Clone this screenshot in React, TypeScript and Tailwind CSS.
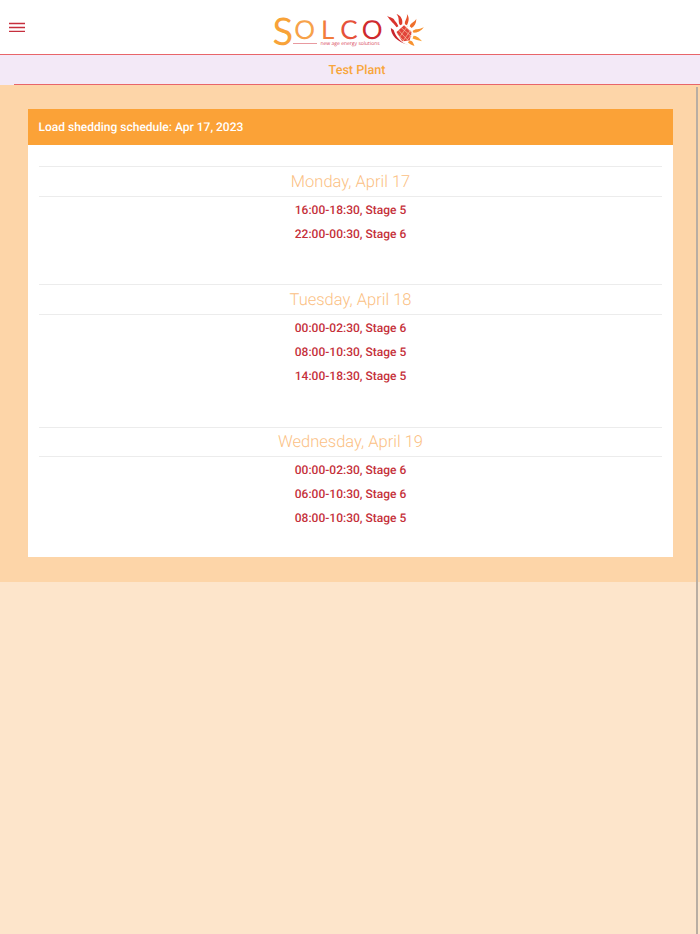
import React from "react";

const schedule = [
  {
    day: "Monday, April 17",
    slots: ["16:00-18:30, Stage 5", "22:00-00:30, Stage 6"],
  },
  {
    day: "Tuesday, April 18",
    slots: ["00:00-02:30, Stage 6", "08:00-10:30, Stage 5", "14:00-18:30, Stage 5"],
  },
  {
    day: "Wednesday, April 19",
    slots: ["00:00-02:30, Stage 6", "06:00-10:30, Stage 6", "08:00-10:30, Stage 5"],
  },
];

const rays = [
  { d: "M12 15 C9 11 6 9 2 3 C5 5 9 5 10 8 C12 10 13 12 14 14 Z", fill: "#d9342e" },
  { d: "M16 13 C13 10 16 6 12 1 C17 3 19 7 18 12 Z", fill: "#dd3b2d" },
  { d: "M21 12 C20 8 24 6 23 1 C26 5 25 9 23 13 Z", fill: "#e8542c" },
  { d: "M26 14 C27 10 31 10 33 6 C33 11 31 14 28 16 Z", fill: "#ef6f2b" },
  { d: "M29 19 C32 16 35 18 41 15 C38 19 34 21 30 21 Z", fill: "#f68f2e" },
  { d: "M30 24 C33 24 36 26 39 30 C35 29 32 28 29 27 Z", fill: "#f9a032" },
  { d: "M26 29 C29 29 30 32 31 35 C28 34 26 33 24 31 Z", fill: "#f79230" },
];

const SunIcon = () => (
  <svg width="40" height="34" viewBox="0 0 42 36" className="mt-px">
    {rays.map((ray, index) => (
      <path key={index} d={ray.d} fill={ray.fill} />
    ))}
    <path d="M12 20 L20 13 L28 20 L26 29 L18 30 Z" fill="#e2433a" />
    <path
      d="M14 18 L25 30 M17 15.5 L28 25 M21 14 L28 21 M12.5 22 L20 30 M15 26 L24 13.5 M19 29.5 L27 18 M23 29 L28.5 22"
      stroke="#f9c9a8"
      strokeWidth="0.7"
    />
    <path d="M6 16 C6 23 12 31 25 34 C17 32 11 25 9 18 Z" fill="#c9242c" />
  </svg>
);

const Logo = () => (
  <div className="flex h-[36px] items-start">
    <div className="relative flex w-[111px] items-start font-['Lato',sans-serif] font-normal">
      <span className="ml-[-1px] text-[38px] leading-none text-[#f8a338]">S</span>
      <span className="mt-[7px] ml-[1px] text-[26px] leading-[21px] text-[#f7a24a]">O</span>
      <span className="mt-[7px] ml-[6px] text-[26px] leading-[21px] text-[#f27c3a]">L</span>
      <span className="mt-[7px] ml-[6px] text-[26px] leading-[21px] text-[#e6523a]">C</span>
      <span className="mt-[7px] ml-[4px] text-[26px] leading-[21px] text-[#cf2a2e]">O</span>
      <div className="absolute top-[29px] left-[47px] whitespace-nowrap font-['Open_Sans',sans-serif] text-[5px] leading-[6px] font-normal text-[#d9465a]">
        new age energy solutions
      </div>
      <div className="absolute top-[31px] left-[19px] h-px w-[24px] bg-[#e89aa0]" />
    </div>
    <SunIcon />
  </div>
);

const App = () => {
  return (
    <div className="relative min-h-[934px] bg-[#fde5cb] font-['Roboto',sans-serif] [text-rendering:geometricPrecision]">
      <header className="relative flex h-[55px] justify-center border-b border-[#e8656a] bg-white pt-[12px]">
        <button className="absolute top-[22px] left-[9px]">
          <svg width="16" height="10" viewBox="0 0 16 10" className="block">
            <path d="M0 1.5H16M0 5.5H16M0 9.5H16" stroke="#c62f3d" strokeWidth="1.5" />
          </svg>
        </button>
        <div className="ml-[-2px]">
          <Logo />
        </div>
      </header>

      <div className="bg-[#f3e9f7] pl-[14px]">
        <div className="flex h-[30px] items-center justify-center border-b border-[#e8656a] pt-[3px] text-[12.6px] font-medium text-[#f8a63c]">
          Test Plant
        </div>
      </div>

      <main className="bg-[#fdd5a8] pt-[24px] pr-[27px] pb-[25px] pl-[28px]">
        <section className="bg-white">
          <h2 className="flex h-[36px] items-center bg-[#fba237] pr-[11px] pl-[10.5px] text-xs font-medium text-white">
            Load shedding schedule: Apr 17, 2023
          </h2>
          <div className="flex flex-col gap-[41.3px] px-[11px] pt-[21.3px] pb-[29.3px]">
            {schedule.map((item) => (
              <div key={item.day}>
                <h3 className="flex h-[30.4px] items-center justify-center border-y border-[#ececec] pt-[3px] text-[16.5px] font-light text-[#fbbf84]">
                  {item.day}
                </h3>
                <ul className="flex flex-col gap-1.5 pt-[4px] text-center text-xs font-medium text-[#c5303a]">
                  {item.slots.map((slot, index) => (
                    <li key={index} className="flex h-[18.2px] items-center justify-center">
                      {slot}
                    </li>
                  ))}
                </ul>
              </div>
            ))}
          </div>
        </section>
      </main>

      <div className="absolute top-[87px] right-[2px] bottom-0 w-[2px] bg-[#b9aea3]" />
    </div>
  );
};

export default App;
